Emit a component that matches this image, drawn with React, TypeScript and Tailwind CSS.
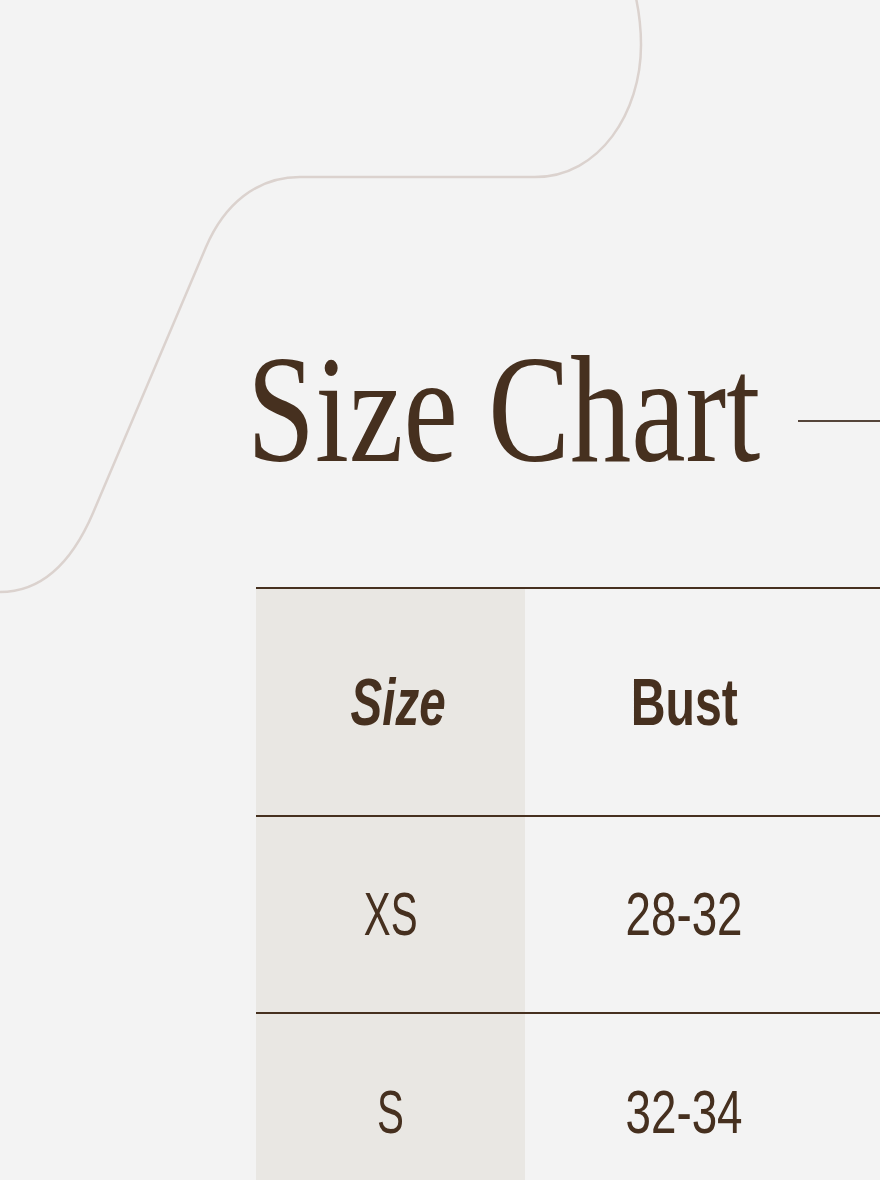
import React from "react";

const rows = [
  { size: "XS", bust: "28-32" },
  { size: "S", bust: "32-34" },
];

export default function App() {
  return (
    <div className="relative w-[880px] h-[1180px] overflow-hidden bg-[#f3f3f3] text-[#46301f]">
      <svg
        className="absolute left-0 top-0 pointer-events-none"
        width="880"
        height="700"
        viewBox="0 0 880 700"
        fill="none"
      >
        <path
          d="M -2 592 C 42 593, 72 562, 93 513 L 206 247 C 224 205, 256 177, 300 177 L 535 177 C 600 177, 641 112, 641 45 C 641 27, 639 12, 636 -2"
          stroke="#dbd2ce"
          strokeWidth="2.5"
        />
      </svg>

      <div className="relative flex flex-col pl-[247px] pt-[333px]">
        <div className="flex items-start">
          <div className="w-[513px] shrink-0">
            <h1
              className="inline-block whitespace-nowrap origin-left scale-x-[0.8] text-[153px] leading-none font-normal"
              style={{ fontFamily: '"Liberation Serif", "Times New Roman", serif' }}
            >
              Size Chart
            </h1>
          </div>
          <div className="ml-[38px] mt-[87px] h-[2px] flex-1 bg-[#55453a]" />
        </div>

        <div
          className="mt-[101px] ml-[9px] border-t-2 border-[#46301f]"
          style={{ fontFamily: '"Liberation Sans", Arial, sans-serif' }}
        >
          <div className="grid grid-cols-[269px_318px_1fr] h-[228px] border-b-2 border-[#46301f]">
            <div className="flex items-center justify-center bg-[#e9e7e3] pl-[16px]">
              <span className="inline-block scale-x-[0.72] text-[66px] font-bold italic leading-none">
                Size
              </span>
            </div>
            <div className="flex items-center justify-center">
              <span className="inline-block scale-x-[0.73] text-[66px] font-bold leading-none">
                Bust
              </span>
            </div>
            <div />
          </div>
          {rows.map((r, i) => (
            <div
              key={r.size}
              className={
                i === 0
                  ? "grid grid-cols-[269px_318px_1fr] h-[197px] border-b-2 border-[#46301f]"
                  : "grid grid-cols-[269px_318px_1fr] h-[197px]"
              }
            >
              <div className="flex items-center justify-center bg-[#e9e7e3]">
                <span className="inline-block scale-x-[0.66] text-[61px] font-normal leading-none">
                  {r.size}
                </span>
              </div>
              <div className="flex items-center justify-center">
                <span className="inline-block scale-x-[0.75] text-[61px] font-normal leading-none">
                  {r.bust}
                </span>
              </div>
              <div />
            </div>
          ))}
        </div>
      </div>
    </div>
  );
}
